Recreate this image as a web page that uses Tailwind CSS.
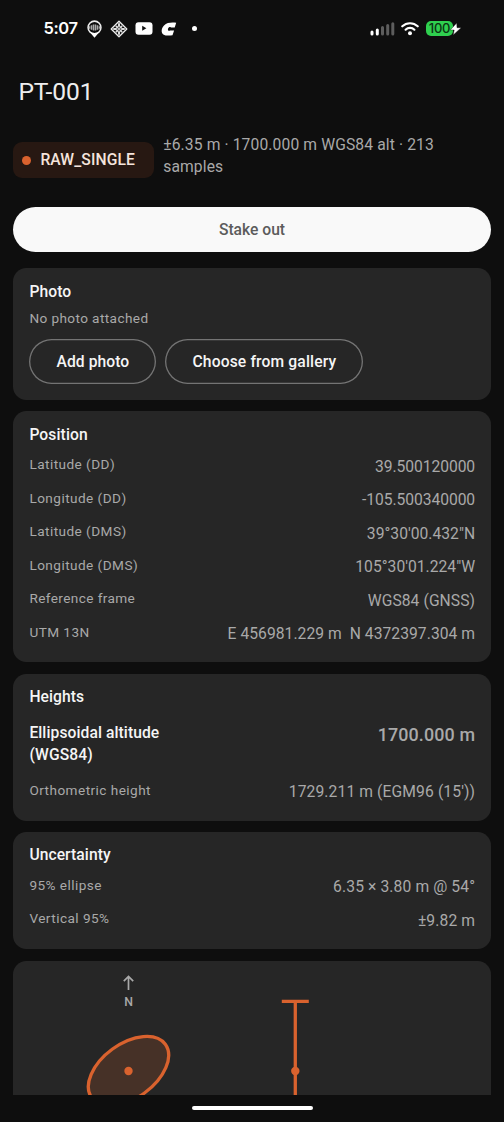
<!DOCTYPE html>
<html lang="en">
<head>
<meta charset="utf-8">
<title>PT-001</title>
<script src="https://cdn.jsdelivr.net/npm/@tailwindcss/browser@4"></script>
</head>
<body class="bg-[#0e0e0e]">
<div class="flex h-[1122px] w-[504px] flex-col overflow-hidden bg-[#0e0e0e] font-[Roboto,sans-serif] text-[15.65px] leading-[22.4px] text-[#a9a9a9]">
  <header class="flex h-[57px] shrink-0 items-center pl-[43.5px] pr-[43px] text-white">
    <span class="w-[34px] font-[Inter,sans-serif] text-[16.5px] font-semibold tracking-[-0.4px]">5:07</span>
    <svg class="ml-[8.5px]" width="17" height="18" viewBox="0 0 17 18">
      <circle cx="8.5" cy="7.5" r="6.4" fill="none" stroke="#eee" stroke-width="1.6"/>
      <path d="M3.2 11.500C6 13.400 11 13.400 13.800 11.500L8.500 17.800z" fill="#fff"/>
      <path d="M3.500 6.200v2.600M5.500 5.200v4.600M7.500 4.600v5.800M9.500 4.600v5.800M11.500 5.200v4.600M13.500 6.200v2.600" stroke="#aaa" stroke-width="1.500"/>
    </svg>
    <svg class="ml-[7px]" width="18" height="18" viewBox="0 0 18 18">
      <path d="M9 1.200L16.800 9 9 16.800 1.200 9z" fill="none" stroke="#eee" stroke-width="1.300" stroke-linejoin="round"/>
      <path d="M9 4v2M9 12v2M4 9h2M12 9h2M6.500 6.500l1 1M11.500 6.500l-1 1M6.500 11.500l1-1M11.500 11.500l-1-1M9 9v.01" stroke="#ddd" stroke-width="2" stroke-linecap="round"/>
    </svg>
    <svg class="ml-[7px]" width="18" height="13" viewBox="0 0 18 13">
      <rect x=".5" y=".3" width="17" height="12.400" rx="3" fill="#fff"/>
      <path d="M7.200 3.800v5l4.200-2.500z" fill="#111"/>
    </svg>
    <svg class="ml-[8px]" width="16" height="14" viewBox="0 0 16 14">
      <path d="M15.200 .8L13.700 5.600H10.200C9.800 4.600 7.900 4.700 7.200 6.300 6.400 8.200 7.400 9.500 9.200 8.500H13.100L11.500 13.200C8 13.800 4.500 13.800 2.300 12.400-.3 10.600 .4 6.100 3 3.400 6 .5 10.500 .3 15.200 .8z" fill="#fff"/>
    </svg>
    <span class="ml-[14.500px] size-[5px] rounded-full bg-white"></span>
    <svg class="ml-auto" width="25" height="14" viewBox="0 0 25 14">
      <g stroke-width="3" stroke-linecap="round">
        <path d="M2 10v2M7.300 8v4" stroke="#fff"/>
        <path d="M12.500 5.500v6.500M17.700 3.500v8.500M22.800 1.700v10.300" stroke="#5d5d5d"/>
      </g>
    </svg>
    <svg class="ml-[5.500px]" width="18" height="15" viewBox="0 0 18 15">
      <g fill="none" stroke="#fff" stroke-width="2.200" stroke-linecap="round">
        <path d="M1.300 5.300a11.200 11.200 0 0 1 15.400 0"/>
        <path d="M4.600 8.700a6.300 6.300 0 0 1 8.800 0"/>
      </g>
      <circle cx="9" cy="12.200" r="2" fill="#fff"/>
    </svg>
    <div class="relative ml-[7.500px] flex h-[15px] w-[35px] items-center">
      <div class="flex h-[15px] w-[27px] items-center justify-center rounded-[5px] bg-[#2fd04f] font-[Inter,sans-serif] text-[13px] font-medium leading-none tracking-[-0.200px] text-[#0b3513]">100</div>
      <svg class="absolute left-[23.500px] top-[1.500px]" width="12" height="12" viewBox="0 0 12 12"><path d="M6.700 0L.3 7h3.900L3.200 12 11.200 4.700H7z" fill="#fff" stroke="#0e0e0e" stroke-width=".4"/></svg>
    </div>
  </header>

  <main class="flex h-[1037.500px] shrink-0 flex-col overflow-hidden px-[13.400px]">
    <h1 class="mt-[19px] h-[32px] pl-[5px] text-[24.600px] leading-[32px] tracking-[-0.100px] text-[#eeeeee]">PT-001</h1>

    <div class="mt-[26px] flex h-[46px] items-end">
      <div class="mb-[1.500px] flex h-[36px] w-[141px] translate-y-px items-center rounded-[9px] bg-[#271812] pl-[9px] text-[#f5e4dc]">
        <span class="size-[9px] rounded-full bg-[#d9622e]"></span>
        <span class="ml-[9px] font-medium tracking-[0.100px]">RAW_SINGLE</span>
      </div>
      <p class="ml-[8.800px] w-[300px] tracking-[0.120px]">±6.35 m · 1700.000 m WGS84 alt · 213 samples</p>
    </div>

    <button class="mt-[28.200px] h-[45px] shrink-0 rounded-full bg-[#f9f9f9] pt-[2px] font-medium text-[#5c5c5c]">Stake out</button>

    <section class="mt-[16px] h-[131.500px] shrink-0 rounded-[13.400px] bg-[#262626] pl-[16px] pr-[15.500px] pt-[12.500px]">
      <h2 class="font-medium tracking-[0.100px] text-[#f5f5f5]">Photo</h2>
      <p class="mt-[6.200px] text-[13.600px] leading-[18px] tracking-[0.400px]">No photo attached</p>
      <div class="mt-[12px] flex gap-[9px]">
        <button class="h-[45px] w-[127px] rounded-full pt-[1px] font-medium tracking-[0.060px] text-[#f5f5f5] shadow-[inset_0_0_0_1.300px_#747474]">Add photo</button>
        <button class="h-[45px] w-[198px] rounded-full pt-[1px] font-medium tracking-[0.140px] text-[#f5f5f5] shadow-[inset_0_0_0_1.300px_#747474]">Choose from gallery</button>
      </div>
    </section>

    <section class="mt-[11.500px] h-[251px] shrink-0 rounded-[13.400px] bg-[#262626] pl-[16px] pr-[15.500px] pt-[12.600px]">
      <h2 class="font-medium tracking-[0.100px] text-[#f5f5f5]">Position</h2>
      <dl class="mt-[9.800px] flex flex-col gap-[11.100px] tracking-[0.020px]">
        <div class="flex justify-between"><dt class="-mt-[0.700px] text-[13.600px] leading-[18px] tracking-[0.450px]">Latitude (DD)</dt><dd class="tracking-[-0.060px]">39.500120000</dd></div>
        <div class="flex justify-between"><dt class="-mt-[0.700px] text-[13.600px] leading-[18px] tracking-[0.450px]">Longitude (DD)</dt><dd class="tracking-[-0.060px]">-105.500340000</dd></div>
        <div class="flex justify-between"><dt class="-mt-[0.700px] text-[13.600px] leading-[18px] tracking-[0.450px]">Latitude (DMS)</dt><dd>39°30'00.432"N</dd></div>
        <div class="flex justify-between"><dt class="-mt-[0.700px] text-[13.600px] leading-[18px] tracking-[0.450px]">Longitude (DMS)</dt><dd>105°30'01.224"W</dd></div>
        <div class="flex justify-between"><dt class="-mt-[0.700px] text-[13.600px] leading-[18px] tracking-[0.400px]">Reference frame</dt><dd class="tracking-[0.080px]">WGS84 (GNSS)</dd></div>
        <div class="flex justify-between"><dt class="-mt-[0.700px] text-[13.600px] leading-[18px] tracking-[0.450px]">UTM 13N</dt><dd class="whitespace-pre tracking-[0.050px]">E 456981.229 m  N 4372397.304 m</dd></div>
      </dl>
    </section>

    <section class="mt-[11.500px] h-[147px] shrink-0 rounded-[13.400px] bg-[#262626] pl-[16px] pr-[15.500px] pt-[12px]">
      <h2 class="font-medium tracking-[0.060px] text-[#f5f5f5]">Heights</h2>
      <dl class="mt-[14px] flex flex-col">
        <div class="flex justify-between">
          <dt class="w-[150px] font-medium tracking-[0.080px] text-[#f5f5f5]">Ellipsoidal altitude (WGS84)</dt>
          <dd class="text-[17.900px] font-medium leading-[26.800px] tracking-[0.120px]">1700.000 m</dd>
        </div>
        <div class="mt-[14.500px] flex justify-between tracking-[0.110px]"><dt class="-mt-[0.700px] text-[13.600px] leading-[18px] tracking-[0.450px]">Orthometric height</dt><dd>1729.211 m (EGM96 (15'))</dd></div>
      </dl>
    </section>

    <section class="mt-[11.500px] h-[117px] shrink-0 rounded-[13.400px] bg-[#262626] pl-[16px] pr-[15.500px] pt-[12px]">
      <h2 class="font-medium tracking-[0.060px] text-[#f5f5f5]">Uncertainty</h2>
      <dl class="mt-[10px] flex flex-col gap-[11.100px] tracking-[0.110px]">
        <div class="flex justify-between"><dt class="-mt-[0.700px] text-[13.600px] leading-[18px] tracking-[0.450px]">95% ellipse</dt><dd>6.35 × 3.80 m @ 54°</dd></div>
        <div class="flex justify-between"><dt class="-mt-[0.700px] text-[13.600px] leading-[18px] tracking-[0.450px]">Vertical 95%</dt><dd>±9.82 m</dd></div>
      </dl>
    </section>

    <section class="mt-[11.500px] h-[220px] shrink-0 rounded-[13.400px] bg-[#262626]">
      <svg class="block" width="477" height="220" viewBox="0 0 477 220">
        <path d="M115.500 29V15.500M110.800 20.200L115.500 15.500l4.700 4.700" fill="none" stroke="#a9a9a9" stroke-width="1.700"/>
        <text x="115.500" y="44.500" text-anchor="middle" font-family="Roboto" font-size="12.300" font-weight="500" fill="#a9a9a9">N</text>
        <ellipse cx="115.500" cy="110" rx="45.500" ry="27.200" transform="rotate(-36 115.500 110)" fill="#d9622e" fill-opacity=".18" stroke="#d9622e" stroke-width="3.300"/>
        <circle cx="115.500" cy="110" r="4.200" fill="#d9622e"/>
        <path d="M268.800 40.300H295.800M282.300 40.300V180" stroke="#d9622e" stroke-width="3.300"/>
        <circle cx="282.300" cy="110" r="4.200" fill="#d9622e"/>
      </svg>
    </section>
  </main>

  <footer class="flex flex-1 justify-center pt-[11.500px]">
    <span class="h-[4px] w-[121px] rounded-full bg-white"></span>
  </footer>
</div>
</body>
</html>
